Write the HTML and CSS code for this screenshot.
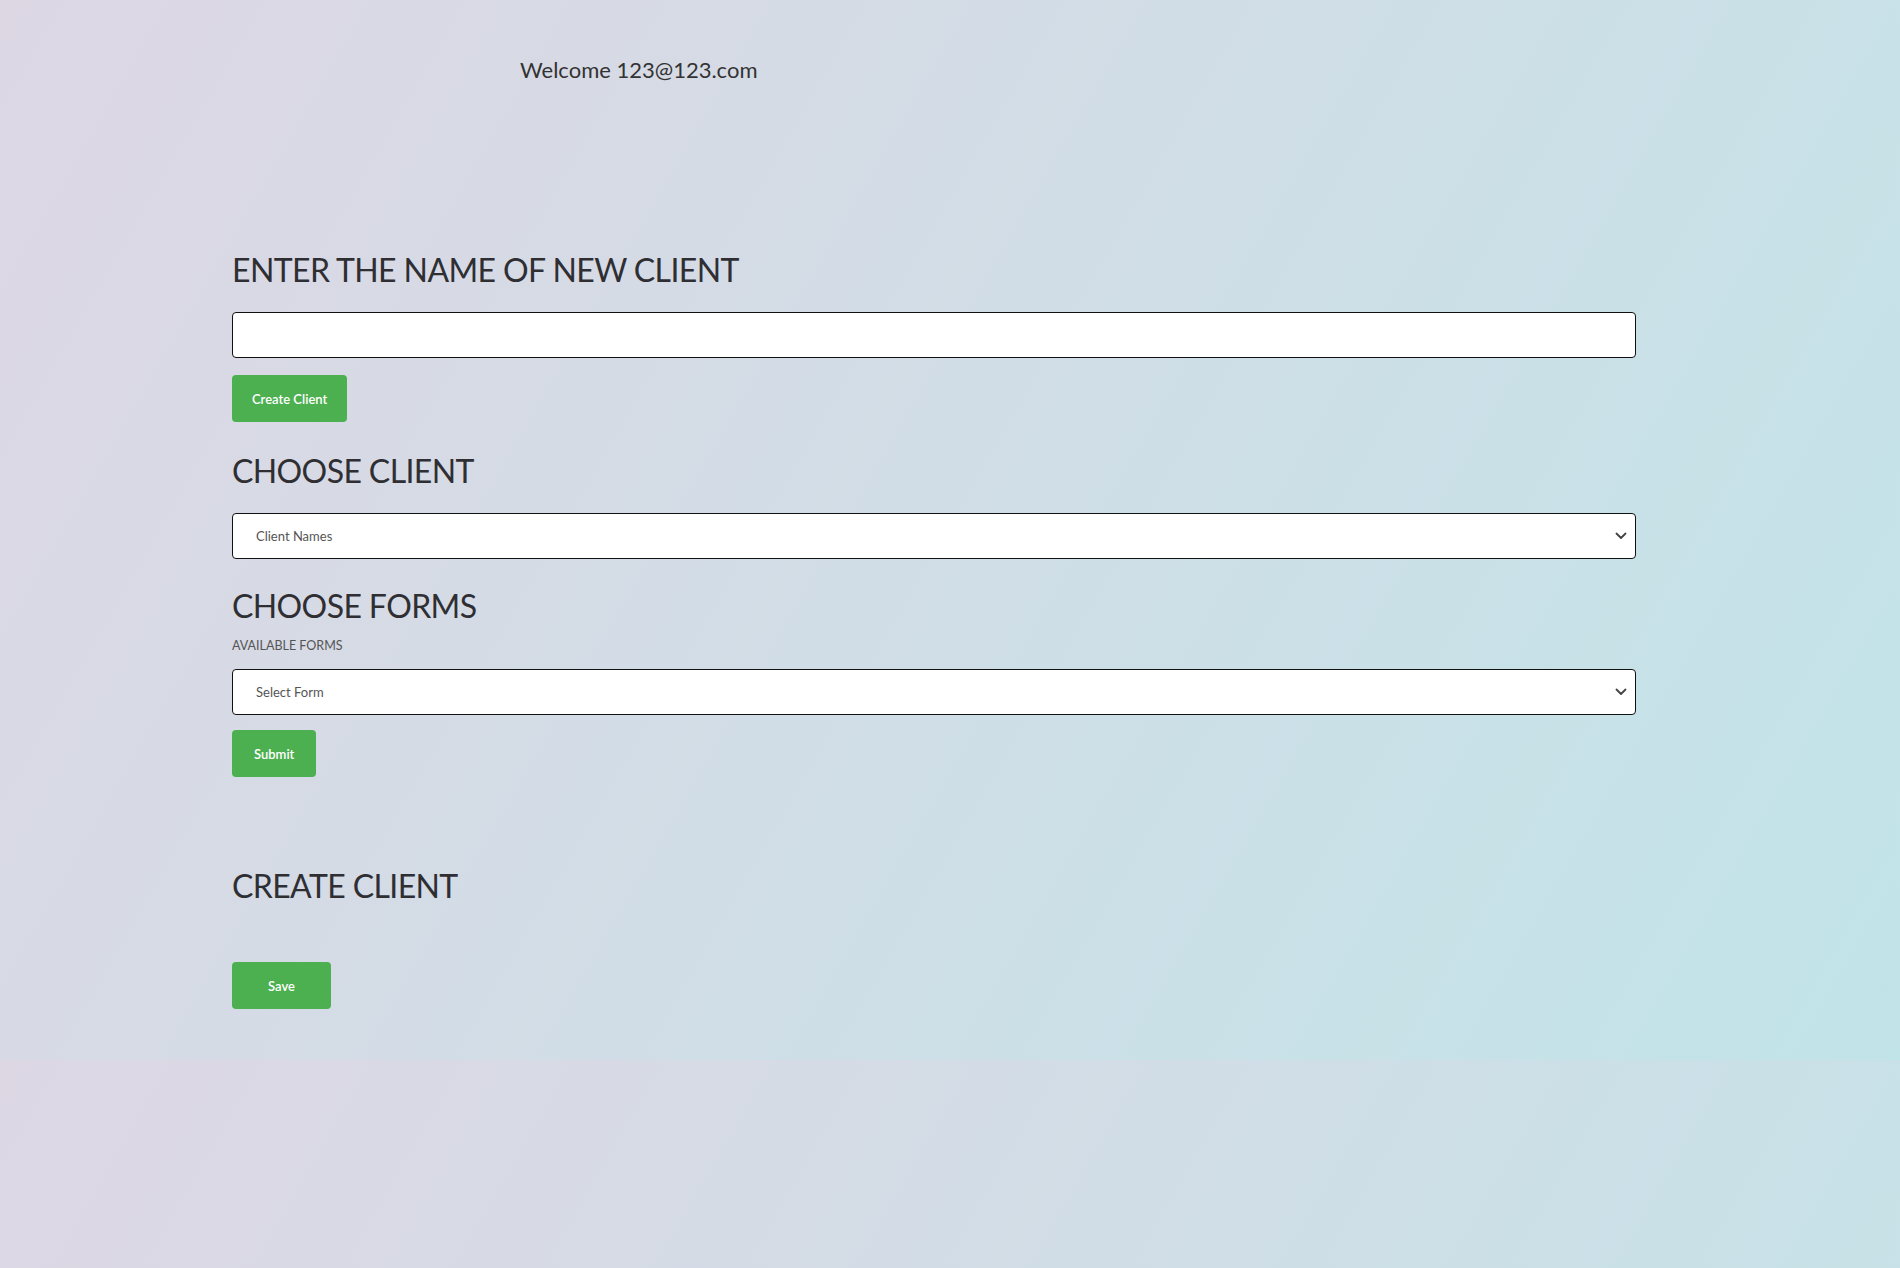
FILE: index.html
```html
<!DOCTYPE html>
<html lang="en">
<head>
<meta charset="utf-8">
<title>Clients</title>
<link rel="stylesheet" href="styles.css">
</head>
<body>
<header class="topbar">
  <span class="welcome">Welcome 123@123.com</span>
</header>
<main class="content">
  <section class="block">
    <h1 class="heading heading-first">ENTER THE NAME OF NEW CLIENT</h1>
    <input class="field" type="text">
    <button class="btn btn-create">Create Client</button>
  </section>
  <section class="block">
    <h1 class="heading heading-choose">CHOOSE CLIENT</h1>
    <div class="select-wrap">
      <select class="field select"><option>Client Names</option></select>
      <svg class="chevron" width="12" height="8" viewBox="0 0 12 8"><path d="M1.5 1.5 L6 6 L10.5 1.5" fill="none" stroke="#444" stroke-width="1.8" stroke-linecap="round" stroke-linejoin="round"/></svg>
    </div>
  </section>
  <section class="block">
    <h1 class="heading">CHOOSE FORMS</h1>
    <label class="small-label">AVAILABLE FORMS</label>
    <div class="select-wrap">
      <select class="field select"><option>Select Form</option></select>
      <svg class="chevron" width="12" height="8" viewBox="0 0 12 8"><path d="M1.5 1.5 L6 6 L10.5 1.5" fill="none" stroke="#444" stroke-width="1.8" stroke-linecap="round" stroke-linejoin="round"/></svg>
    </div>
    <button class="btn btn-submit">Submit</button>
  </section>
  <section class="block block-create">
    <h1 class="heading">CREATE CLIENT</h1>
    <button class="btn btn-save">Save</button>
  </section>
</main>
</body>
</html>
```
FILE: styles.css
```css
html, body {
  margin: 0;
  padding: 0;
}
body {
  font-family: Lato, "Open Sans", sans-serif;
  color: #333;
  background: linear-gradient(120deg, #ddd7e4 0%, #d3dce6 40%, #c1e4e8 100%);
}
.topbar {
  height: 140px;
  padding-left: 520px;
  box-sizing: border-box;
  padding-top: 56px;
}
.welcome {
  font-size: 22px;
  line-height: 28px;
  color: #333;
}
.content {
  margin-left: 232px;
  width: 1404px;
  padding-bottom: 51px;
  display: flex;
  flex-direction: column;
}
.block {
  display: flex;
  flex-direction: column;
  align-items: flex-start;
}
.heading {
  font-size: 32px;
  letter-spacing: -0.6px;
  font-weight: 400;
  line-height: 40px;
  margin: 27px 0 22px;
  color: #2f2f33;
}
.heading-first {
  margin-top: 110px;
}
.heading-choose {
  margin-top: 29px;
}
.field {
  box-sizing: border-box;
  width: 100%;
  height: 46px;
  border: 1px solid #111;
  border-radius: 4px;
  background: #fff;
  margin: 0;
  font-family: inherit;
  outline: none;
}
.select-wrap {
  position: relative;
  width: 100%;
}
.select {
  appearance: none;
  -webkit-appearance: none;
  padding: 0 23px;
  font-size: 13px;
  color: #555;
  display: block;
}
.chevron {
  position: absolute;
  right: 9px;
  top: 19px;
}
.small-label {
  font-size: 12.5px;
  line-height: 18px;
  color: #555;
  margin: -11px 0 14px;
}
.btn {
  margin-top: 17px;
  height: 47px;
  padding: 0 20px;
  border: none;
  border-radius: 4px;
  background: #4caf50;
  color: #fff;
  font-family: inherit;
  font-size: 13px;
  font-weight: 600;
}
.btn-submit {
  margin-top: 15px;
  padding: 0 22px;
}
.btn-save {
  margin-top: 34px;
  padding: 0 36px;
}
.block-create .heading {
  margin-top: 89px;
}
```
